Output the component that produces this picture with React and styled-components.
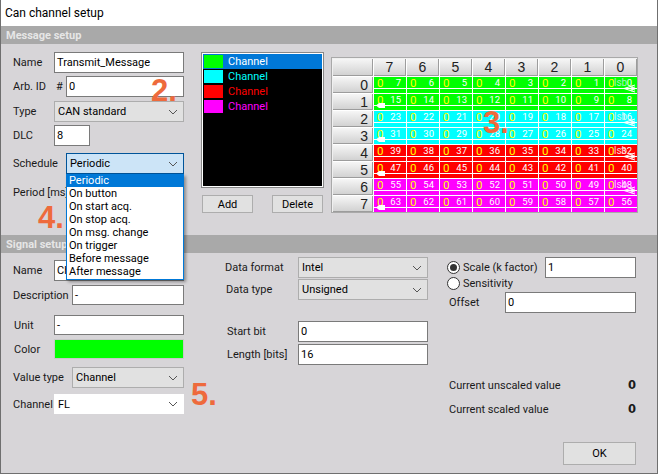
import React from "react";
import styled, { createGlobalStyle } from "styled-components";

const GlobalStyle = createGlobalStyle`
  html, body { margin: 0; padding: 0; background: #d7d5d8; }
  * { box-sizing: border-box; }
`;

const Window = styled.div`
  position: relative;
  width: 658px;
  height: 474px;
  display: flex;
  flex-direction: column;
  overflow: hidden;
  background: #d7d5d8;
  border: 1px solid #6f6f6f;
  border-top: none;
  font-family: Roboto, "Liberation Sans", sans-serif;
  font-size: 11px;
  color: #1a1a1a;
`;

const TitleBar = styled.div`
  height: 26px;
  padding-left: 4px;
  display: flex;
  align-items: center;
  background: #fff;
  font-size: 12px;
  color: #000;
`;

const SectionHeader = styled.div`
  height: 18px;
  padding-left: 5px;
  display: flex;
  align-items: center;
  background: #a9a9a9;
  color: #e6e6e6;
  font-size: 11px;
  font-weight: 700;
`;

const MessagePanel = styled.div`
  height: 191px;
  display: flex;
  padding: 8px 0 0 12px;
`;

const SignalPanel = styled.div`
  flex: 1;
  display: flex;
  padding: 4px 0 0 12px;
`;

const Column = styled.div`
  display: flex;
  flex-direction: column;
  width: ${(p) => p.$width}px;
  margin-left: ${(p) => p.$left || 0}px;
  margin-top: ${(p) => p.$top || 0}px;
`;

const Row = styled.div`
  position: relative;
  display: flex;
  align-items: center;
  height: ${(p) => p.$height || 21}px;
  margin-top: ${(p) => p.$top || 0}px;
`;

const Label = styled.div`
  flex: none;
  width: ${(p) => p.$width}px;
  padding-left: ${(p) => p.$pad || 0}px;
  white-space: nowrap;
`;

const Field = styled.div`
  flex: ${(p) => (p.$width ? "none" : 1)};
  width: ${(p) => (p.$width ? `${p.$width}px` : "auto")};
  height: 100%;
  display: flex;
  align-items: center;
  padding-left: 2px;
  background: #fff;
  border: 1px solid #7a7a7a;
  color: #000;
  white-space: nowrap;
  overflow: hidden;
`;

const ColorField = styled.div`
  flex: 1;
  height: 100%;
  background: ${(p) => p.$color};
  border: 1px solid #c8c8c8;
`;

const Select = styled.div`
  flex: 1;
  height: 100%;
  display: flex;
  align-items: center;
  justify-content: space-between;
  padding: 0 5px 0 3px;
  background: ${(p) => (p.$white ? "#fff" : p.$open ? "#cce4f7" : "#e1e1e1")};
  border: 1px solid ${(p) => (p.$white ? "#fff" : p.$open ? "#005499" : "#adadad")};
  color: #000;
`;

const Popup = styled.div`
  position: absolute;
  z-index: 2;
  left: 53px;
  top: 21px;
  width: 118px;
  padding-bottom: 1px;
  background: #fff;
  border: 1px solid #0078d7;
  border-top: none;
  box-shadow: 2px 2px 3px rgba(0, 0, 0, 0.35);
`;

const PopupItem = styled.div`
  height: 13px;
  line-height: 13px;
  padding-left: 2px;
  color: ${(p) => (p.$active ? "#fff" : "#000")};
  background: ${(p) => (p.$active ? "#0078d7" : "transparent")};
`;

const ChannelList = styled.div`
  height: 136px;
  padding: 1px;
  background: #fff;
  border: 1px solid #888;
`;

const ChannelBox = styled.div`
  height: 100%;
  background: #000;
`;

const ChannelItem = styled.div`
  height: 15px;
  display: flex;
  align-items: center;
  gap: 5px;
  padding-left: 1px;
  color: ${(p) => (p.$active ? "#fff" : p.$color)};
  background: ${(p) => (p.$active ? "#0078d7" : "transparent")};
`;

const Swatch = styled.span`
  width: 19px;
  height: 13px;
  background: ${(p) => p.$color};
`;

const ButtonRow = styled.div`
  display: flex;
  justify-content: ${(p) => (p.$end ? "flex-end" : "space-between")};
  margin: ${(p) => (p.$end ? "23px 0 0" : "7px 1px 0")};
`;

const Button = styled.div`
  width: ${(p) => p.$width}px;
  height: ${(p) => p.$height}px;
  display: flex;
  align-items: center;
  justify-content: center;
  background: #e1e1e1;
  border: 1px solid #adadad;
  color: #000;
`;

const BitBox = styled.div`
  width: 307px;
  height: 156px;
  margin: 5px 0 0 7px;
  padding: 1px 0 0 1px;
  background: #f0f0f0;
  border: 1px solid #a9a9a9;
`;

const BitGrid = styled.div`
  display: grid;
  grid-template-columns: 40px repeat(8, 32px);
  grid-template-rows: 17px repeat(8, 16px);
  gap: 1px;
  background: #fff;
`;

const HeadCell = styled.div`
  display: flex;
  align-items: center;
  justify-content: ${(p) => (p.$side ? "flex-end" : "center")};
  padding-right: ${(p) => (p.$side ? 4 : 0)}px;
  background: linear-gradient(#f6f6f6, #d2d2d2);
  border-right: 1px solid #9c9c9c;
  border-bottom: 1px solid #9c9c9c;
  font-family: "Liberation Sans", sans-serif;
  font-size: 14px;
  color: #222;
`;

const BitCell = styled.div`
  position: relative;
  background: ${(p) => p.$color};
  font-size: 9.5px;
  color: #fff;
`;

const BitTop = styled.div`
  height: 12px;
  display: flex;
  align-items: center;
  justify-content: space-between;
  padding: 0 5px 0 3px;
  border-bottom: 1px solid #fff;
`;

const Zero = styled.span`
  color: #ff0;
  font-size: 11.5px;
`;

const Lsb = styled.span`
  position: absolute;
  left: 9px;
  top: 0;
  line-height: 11px;
  font-size: 10px;
  color: ${(p) => p.$color};
`;

const Mark = styled.svg`
  position: absolute;
  left: ${(p) => p.$left}px;
  top: ${(p) => p.$top}px;
`;

const Radio = styled.span`
  flex: none;
  width: 13px;
  height: 13px;
  margin: 0 3px 0 1px;
  display: flex;
  align-items: center;
  justify-content: center;
  background: #fff;
  border: 1px solid #333;
  border-radius: 50%;

  &::after {
    content: "";
    width: 7px;
    height: 7px;
    border-radius: 50%;
    background: ${(p) => (p.$on ? "#333" : "transparent")};
  }
`;

const Value = styled.div`
  flex: 1;
  text-align: right;
  font-family: "DejaVu Sans", sans-serif;
  font-size: 11.5px;
  font-weight: 700;
`;

const Callout = styled.div`
  position: absolute;
  z-index: 3;
  left: ${(p) => p.$left}px;
  top: ${(p) => p.$top}px;
  font-family: "Liberation Sans", sans-serif;
  font-size: 31px;
  font-weight: 700;
  line-height: 31px;
  color: #ee6a3c;
`;

const Chevron = () => (
  <svg width="10" height="6" viewBox="0 0 10 6" fill="none" stroke="#555" strokeWidth="1">
    <path d="M1 1l4 4 4-4" />
  </svg>
);

const channels = [
  { color: "#00ff00" },
  { color: "#00ffff" },
  { color: "#ff0000" },
  { color: "#ff00ff" },
];

const schedules = [
  "Periodic",
  "On button",
  "On start acq.",
  "On stop acq.",
  "On msg. change",
  "On trigger",
  "Before message",
  "After message",
];

const columns = [7, 6, 5, 4, 3, 2, 1, 0];
const rows = [0, 1, 2, 3, 4, 5, 6, 7];
const lsbTint = { "#00ff00": "#a8f0c0", "#00ffff": "#c8f4f4", "#ff0000": "#ffd0d0", "#ff00ff": "#ffd0ff" };

const BitRow = ({ row }) => {
  const color = channels[Math.floor(row / 2)].color;
  return (
    <>
      <HeadCell $side>{row}</HeadCell>
      {columns.map((col) => (
        <BitCell key={col} $color={color}>
          <BitTop>
            <Zero>0</Zero>
            <span>{row * 8 + col}</span>
          </BitTop>
          {row % 2 === 0 && col === 0 && <Lsb $color={lsbTint[color]}>lsb</Lsb>}
          {row % 2 === 0 && col === 0 && (
            <Mark $left={18} $top={7} width="13" height="9" viewBox="0 0 13 9" fill="none" stroke="#fff">
              <path d="M12 1L1 4.500l11 3.500M12 3L6 4.500l6 1.500M9 1.500v6" />
            </Mark>
          )}
          {row % 2 === 1 && col === 7 && (
            <Mark $left={2} $top={9} width="9" height="5" viewBox="0 0 9 5" fill="#fff">
              <path d="M0 2.500L3 0h6v5H3z" />
            </Mark>
          )}
        </BitCell>
      ))}
    </>
  );
};

export default function App() {
  return (
    <>
      <GlobalStyle />
      <Window>
        <TitleBar>Can channel setup</TitleBar>
        <SectionHeader>Message setup</SectionHeader>
        <MessagePanel>
          <Column $width={171}>
            <Row>
              <Label $width={41}>Name</Label>
              <Field>Transmit_Message</Field>
            </Row>
            <Row $top={3}>
              <Label $width={43}>Arb. ID</Label>
              <Label $width={10}>#</Label>
              <Field>0</Field>
            </Row>
            <Row $top={4}>
              <Label $width={41}>Type</Label>
              <Select>
                CAN standard
                <Chevron />
              </Select>
            </Row>
            <Row $top={3}>
              <Label $width={41}>DLC</Label>
              <Field $width={36}>8</Field>
            </Row>
            <Row $top={7}>
              <Label $width={53}>Schedule</Label>
              <Select $open>
                Periodic
                <Chevron />
              </Select>
              <Popup>
                {schedules.map((item, i) => (
                  <PopupItem key={item} $active={i === 0}>
                    {item}
                  </PopupItem>
                ))}
              </Popup>
            </Row>
            <Row $top={8}>
              <Label $width={53}>Period [ms]</Label>
              <Field />
            </Row>
          </Column>
          <Column $left={17} $width={123}>
            <ChannelList>
              <ChannelBox>
                {channels.map((ch, i) => (
                  <ChannelItem key={ch.color} $active={i === 0} $color={ch.color}>
                    <Swatch $color={ch.color} />
                    Channel
                  </ChannelItem>
                ))}
              </ChannelBox>
            </ChannelList>
            <ButtonRow>
              <Button $width={51} $height={18}>Add</Button>
              <Button $width={51} $height={18}>Delete</Button>
            </ButtonRow>
          </Column>
          <BitBox>
            <BitGrid>
              <HeadCell />
              {columns.map((col) => (
                <HeadCell key={col}>{col}</HeadCell>
              ))}
              {rows.map((row) => (
                <BitRow key={row} row={row} />
              ))}
            </BitGrid>
          </BitBox>
        </MessagePanel>
        <SectionHeader>Signal setup</SectionHeader>
        <SignalPanel>
          <Column $width={171} $top={3}>
            <Row>
              <Label $width={41}>Name</Label>
              <Field>Channel</Field>
            </Row>
            <Row $top={4} $height={20}>
              <Label $width={59}>Description</Label>
              <Field>-</Field>
            </Row>
            <Row $top={10} $height={20}>
              <Label $width={41} $pad={1}>Unit</Label>
              <Field>-</Field>
            </Row>
            <Row $top={4} $height={20}>
              <Label $width={41} $pad={1}>Color</Label>
              <ColorField $color="#00ff00" />
            </Row>
            <Row $top={8}>
              <Label $width={59}>Value type</Label>
              <Select>
                Channel
                <Chevron />
              </Select>
            </Row>
            <Row $top={6} $height={20}>
              <Label $width={41}>Channel</Label>
              <Select $white>
                FL
                <Chevron />
              </Select>
            </Row>
          </Column>
          <Column $left={41} $width={203}>
            <Row>
              <Label $width={73}>Data format</Label>
              <Select>
                Intel
                <Chevron />
              </Select>
            </Row>
            <Row $top={1}>
              <Label $width={73} $pad={1}>Data type</Label>
              <Select>
                Unsigned
                <Chevron />
              </Select>
            </Row>
            <Row $top={21}>
              <Label $width={73} $pad={2}>Start bit</Label>
              <Field>0</Field>
            </Row>
            <Row $top={2}>
              <Label $width={73} $pad={2}>Length [bits]</Label>
              <Field>16</Field>
            </Row>
          </Column>
          <Column $left={18} $width={190}>
            <Row>
              <Radio $on />
              <Label $width={82}>Scale (k factor)</Label>
              <Field>1</Field>
            </Row>
            <Row $top={-3} $height={17}>
              <Radio />
              Sensitivity
            </Row>
            <Row>
              <Label $width={59} $pad={3}>Offset</Label>
              <Field>0</Field>
            </Row>
            <Row $top={62} $height={20}>
              <Label $width={130} $pad={3}>Current unscaled value</Label>
              <Value>0</Value>
            </Row>
            <Row $top={4} $height={20}>
              <Label $width={130} $pad={3}>Current scaled value</Label>
              <Value>0</Value>
            </Row>
            <ButtonRow $end>
              <Button $width={73} $height={23}>OK</Button>
            </ButtonRow>
          </Column>
        </SignalPanel>
        <Callout $left={150} $top={75}>2.</Callout>
        <Callout $left={482} $top={107}>3.</Callout>
        <Callout $left={37} $top={202}>4.</Callout>
        <Callout $left={190} $top={379}>5.</Callout>
      </Window>
    </>
  );
}
